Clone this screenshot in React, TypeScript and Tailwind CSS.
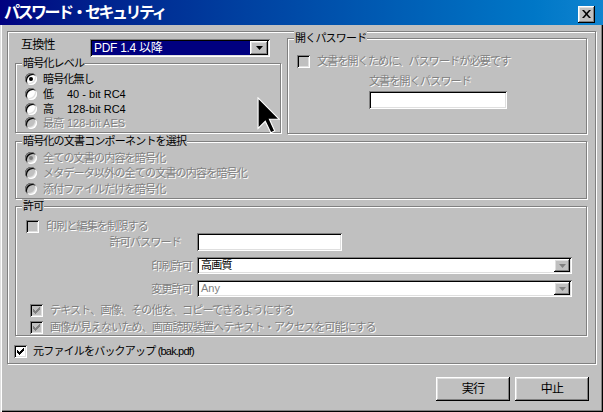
import type { ReactNode } from "react";

const DIS = "text-[#808080] [text-shadow:1px_1px_0_#fff]";
const RAISED =
  "bg-[#c0c0c0] shadow-[inset_-1px_-1px_0_#000,inset_1px_1px_0_#fff,inset_-2px_-2px_0_#808080,inset_2px_2px_0_#dfdfdf]";
const SUNKEN =
  "shadow-[inset_1px_1px_0_#808080,inset_-1px_-1px_0_#fff,inset_2px_2px_0_#000,inset_-2px_-2px_0_#dfdfdf]";
const ETCHED = "border border-[#808080] shadow-[inset_1px_1px_0_#fff,1px_1px_0_#fff]";

function Group({ label, className, children }: { label: string; className: string; children?: ReactNode }) {
  return (
    <div className={`relative ${ETCHED} ${className}`}>
      <span className="absolute -top-[8px] left-[6px] bg-[#c0c0c0] px-[1px] leading-[14px] whitespace-nowrap">
        {label}
      </span>
      {children}
    </div>
  );
}

function Radio({ checked, disabled }: { checked?: boolean; disabled?: boolean }) {
  return (
    <span
      className={`flex items-center justify-center w-3 h-3 rounded-full shrink-0 ${
        disabled ? "bg-[#c0c0c0]" : "bg-white"
      } ${SUNKEN}`}
    >
      {checked && <span className={`w-1 h-1 rounded-full ${disabled ? "bg-[#808080]" : "bg-black"}`} />}
    </span>
  );
}

function Check({ checked, disabled }: { checked?: boolean; disabled?: boolean }) {
  return (
    <span
      className={`flex items-center justify-center w-[13px] h-[13px] shrink-0 ${
        disabled ? "bg-[#c0c0c0]" : "bg-white"
      } ${SUNKEN}`}
    >
      {checked && (
        <svg width="7" height="7" viewBox="0 0 7 7">
          <path
            d="M0 2h1v1h1v1h1V3h1V2h1V1h1V0h1v3H6v1H5v1H4v1H3v1H2V6H1V5H0z"
            fill={disabled ? "#808080" : "#000"}
          />
        </svg>
      )}
    </span>
  );
}

function Arrow({ disabled }: { disabled?: boolean }) {
  return (
    <svg width="7" height="4" viewBox="0 0 7 4">
      <path d="M0 0h7L3.5 4z" fill={disabled ? "#808080" : "#000"} />
    </svg>
  );
}

function Select({ value, disabled, className }: { value: string; disabled?: boolean; className: string }) {
  return (
    <div className={`flex items-center bg-white ${SUNKEN} p-[2px] ${className}`}>
      <span className={`flex-1 pl-[2px] leading-[13px] ${disabled ? "text-[#808080] tracking-normal" : "text-black"}`}>{value}</span>
      <span className={`flex items-center justify-center w-[16px] h-full ${RAISED}`}>
        <Arrow disabled />
      </span>
    </div>
  );
}

function Button({ children }: { children: ReactNode }) {
  return (
    <button className={`w-[74px] h-[24px] text-[12px] ${RAISED}`}>{children}</button>
  );
}

export default function App() {
  return (
    <div className="relative w-[603px] h-[412px] overflow-hidden bg-[#c0c0c0] flex flex-col text-[11px] tracking-[-0.8px] text-black font-['Liberation_Sans','Noto_Sans_CJK_JP',sans-serif]">
      {/* title bar */}
      <div className="h-[25px] shrink-0 flex items-center justify-between bg-gradient-to-r from-[#000080] to-[#1084d0] pl-[4px] pr-[8px]">
        <span className="text-white font-bold text-[16px] tracking-[-2.5px] leading-none">パスワード・セキュリティ</span>
        <span className={`flex items-center justify-center w-[17px] h-[17px] mt-[3px] ${RAISED}`}>
          <svg width="9" height="8" viewBox="0 0 9 8">
            <path d="M0 0h2l2.5 2.7L7 0h2L5.5 4 9 8H7L4.5 5.3 2 8H0l3.5-4z" fill="#000" />
          </svg>
        </span>
      </div>

      <div className="flex-1 flex flex-col shadow-[inset_1px_0_0_#dfdfdf,inset_2px_0_0_#fff,inset_-1px_-1px_0_#000,inset_-2px_-2px_0_#808080]">
        {/* main panel */}
        <div className={`mt-[6px] ml-[7px] w-[589px] h-[333px] flex flex-col ${ETCHED}`}>
          <div className="mt-[6px] ml-[7px] flex gap-[6px]">
            {/* left column */}
            <div className="w-[266px] flex flex-col">
              <div className="h-[19px] flex items-start">
                <span className="ml-[6px] w-[69px] leading-[14px] text-[12px]">互換性</span>
                <div className={`mt-[1px] w-[180px] h-[18px] flex items-center bg-white ${SUNKEN} p-[2px]`}>
                  <span className="flex-1 h-full bg-[#000080] text-white pl-[2px] leading-[14px] text-[12px] tracking-[-0.3px]">
                    PDF 1.4 以降
                  </span>
                  <span className={`flex items-center justify-center w-[18px] h-full ${RAISED}`}>
                    <Arrow />
                  </span>
                </div>
              </div>
              <Group label="暗号化レベル" className="mt-[6px] h-[70px] pt-[8px] pl-[9px] flex flex-col">
                {[
                  { a: "暗号化無し", b: "", on: true },
                  { a: "低", b: "40 - bit RC4" },
                  { a: "高", b: "128-bit RC4" },
                  { a: "最高", b: "128-bit AES", dis: true },
                ].map((r) => (
                  <div key={r.a} className="h-[14.7px] flex items-center">
                    <Radio checked={r.on} disabled={r.dis} />
                    <span className={`ml-[6px] w-[23px] whitespace-nowrap leading-[14px] ${r.dis ? DIS : ""}`}>{r.a}</span>
                    <span className={`ml-[1px] leading-[14px] tracking-normal ${r.dis ? DIS : ""}`}>{r.b}</span>
                  </div>
                ))}
              </Group>
            </div>

            {/* open password */}
            <Group label="開くパスワード" className={`w-[300px] h-[96px] pl-[9px] flex flex-col`}>
              <div className="mt-[15px] flex items-center">
                <Check disabled />
                <span className={`ml-[7px] leading-[14px] ${DIS}`}>文書を開くために、パスワードが必要です</span>
              </div>
              <span className={`mt-[6px] ml-[72px] leading-[14px] ${DIS}`}>文書を開くパスワード</span>
              <div className={`mt-[3px] ml-[72px] w-[138px] h-[18px] bg-white ${SUNKEN}`} />
            </Group>
          </div>

          {/* components */}
          <Group label="暗号化の文書コンポーネントを選択" className="mt-[7px] ml-[7px] w-[572px] h-[58px] pt-[8px] pl-[9px] flex flex-col">
            {[
              { t: "全ての文書の内容を暗号化", on: true },
              { t: "メタデータ以外の全ての文書の内容を暗号化" },
              { t: "添付ファイルだけを暗号化" },
            ].map((r) => (
              <div key={r.t} className="h-[15.5px] flex items-center">
                <Radio checked={r.on} disabled />
                <span className={`ml-[6px] leading-[14px] ${DIS}`}>{r.t}</span>
              </div>
            ))}
          </Group>

          {/* permissions */}
          <Group label="許可" className="mt-[7px] ml-[7px] w-[572px] h-[130px] flex flex-col">
            <div className="mt-[12px] ml-[10px] flex items-center">
              <Check disabled />
              <span className={`ml-[7px] leading-[14px] ${DIS}`}>印刷と編集を制限する</span>
            </div>
            <div className="flex items-center">
              <span className={`w-[165px] text-right leading-[14px] ${DIS}`}>許可パスワード</span>
              <div className={`ml-[16px] w-[145px] h-[18px] bg-white ${SUNKEN}`} />
            </div>
            <div className="mt-[6px] flex items-center">
              <span className={`w-[176px] text-right leading-[14px] ${DIS}`}>印刷許可</span>
              <Select value="高画質" className="ml-[5px] w-[375px] h-[17px]" />
            </div>
            <div className="mt-[6px] flex items-center">
              <span className={`w-[176px] text-right leading-[14px] ${DIS}`}>変更許可</span>
              <Select value="Any" disabled className="ml-[5px] w-[375px] h-[17px]" />
            </div>
            <div className="mt-[6px] ml-[14px] flex items-center">
              <Check checked disabled />
              <span className={`ml-[7px] leading-[14px] ${DIS}`}>テキスト、画像、その他を、コピーできるようにする</span>
            </div>
            <div className="mt-[3px] ml-[14px] flex items-center">
              <Check checked disabled />
              <span className={`ml-[7px] leading-[14px] ${DIS}`}>
                画像が見えないため、画面読取装置へテキスト・アクセスを可能にする
              </span>
            </div>
          </Group>

          <div className="mt-[8px] ml-[6px] flex items-center">
            <Check checked />
            <span className="ml-[6px] leading-[14px]">元ファイルをバックアップ (bak.pdf)</span>
          </div>
        </div>

        <div className="mt-[13px] mr-[14px] flex justify-end gap-[5px]">
          <Button>実行</Button>
          <Button>中止</Button>
        </div>
      </div>

      {/* mouse pointer */}
      <svg className="absolute left-[257px] top-[97px]" width="23" height="37" viewBox="0 0 12 19.5">
        <path
          d="M0.5 0.5V16.5L4.3 12.8L7.2 18.9L9.3 17.9L6.5 11.7H11.6Z"
          fill="#000"
          stroke="#fff"
          strokeWidth="0.6"
        />
      </svg>
    </div>
  );
}
